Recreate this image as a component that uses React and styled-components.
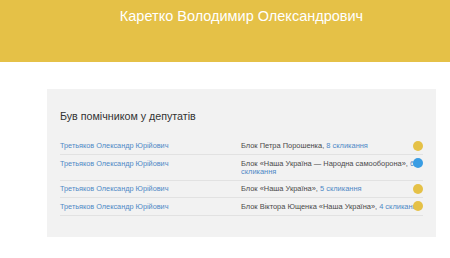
import React from 'react';
import styled, { createGlobalStyle } from 'styled-components';

const GlobalStyle = createGlobalStyle`
  body {
    margin: 0;
    background: #fff;
    font-family: "Liberation Sans", Arial, sans-serif;
  }
`;

const Header = styled.header`
  height: 62px;
  background: #e5c147;
  padding-left: 47px;
  box-sizing: border-box;
`;

const Title = styled.h1`
  width: 389px;
  margin: 0;
  padding-top: 6px;
  text-align: center;
  color: #fff;
  font-size: 14.5px;
  font-weight: normal;
  line-height: 20px;
`;

const Panel = styled.section`
  margin: 27px 0 0 47px;
  width: 389px;
  background: #f2f2f2;
  padding: 21px 13px 21px 13px;
  box-sizing: border-box;
`;

const Heading = styled.h2`
  margin: 0 0 15px;
  font-size: 10.7px;
  font-weight: normal;
  line-height: 13px;
  color: #333;
`;

const Row = styled.div`
  position: relative;
  display: grid;
  grid-template-columns: 181px 1fr;
  padding: 4.3px 0 4.2px;
  border-bottom: 1px solid #e2e2e2;
  font-size: 7.45px;
  line-height: 8px;
`;

const Link = styled.span`
  color: #4f89c6;
`;

const Person = styled(Link)`
  font-size: 7.3px;
`;

const Party = styled.span`
  color: #4a4a4a;
  margin-right: -10px;
`;

const Dot = styled.span`
  position: absolute;
  right: 0;
  top: 3px;
  width: 10px;
  height: 10px;
  border-radius: 50%;
  background: ${(p) => (p.$blue ? '#3a9de3' : '#e5c147')};
`;

const rows = [
  { party: 'Блок Петра Порошенка', conv: '8 скликання' },
  { party: 'Блок «Наша Україна — Народна самооборона»', conv: '6 скликання', blue: true },
  { party: 'Блок «Наша Україна»', conv: '5 скликання' },
  { party: 'Блок Віктора Ющенка «Наша Україна»', conv: '4 скликання' },
];

export default function App() {
  return (
    <>
      <GlobalStyle />
      <Header>
        <Title>Каретко Володимир Олександрович</Title>
      </Header>
      <Panel>
        <Heading>Був помічником у депутатів</Heading>
        {rows.map((r, i) => (
          <Row key={i}>
            <Person>Третьяков Олександр Юрійович</Person>
            <Party>
              {r.party}, <Link>{r.conv}</Link>
            </Party>
            <Dot $blue={r.blue} />
          </Row>
        ))}
      </Panel>
    </>
  );
}
